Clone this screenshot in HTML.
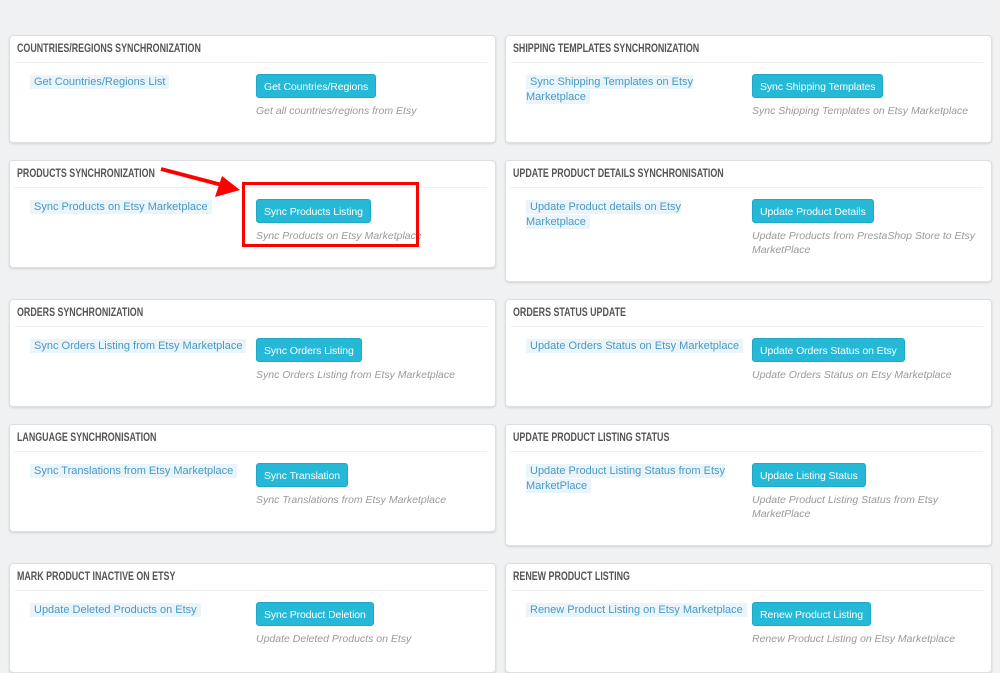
<!DOCTYPE html>
<html><head><meta charset="utf-8"><style>
body{margin:0;width:1000px;height:660px;background:#eff1f2;position:relative;overflow:hidden;font-family:"Liberation Sans",sans-serif;}
.p{position:absolute;background:#fff;border:1px solid #dcdfe3;border-radius:4px;box-shadow:0 1px 2px rgba(0,0,0,.12);box-sizing:border-box;width:487px;}
.h{position:absolute;left:7px;top:5px;font-family:"Liberation Sans",sans-serif;font-size:12px;color:#555;font-weight:bold;white-space:nowrap;transform:scaleX(.74);transform-origin:left;}
.s{position:absolute;left:4px;right:8px;top:26px;border-top:1px solid #eef0f2;}
.l{position:absolute;left:20px;top:39px;width:178px;font-size:11px;line-height:15px;color:#4a98c4;}
.l span{background:#eaf5fb;padding:1px 4px 1px 4px;}
.b{position:absolute;left:246px;top:38px;height:24px;line-height:24px;padding:0 7px;background:#25b9d7;border:1px solid #20a9c4;border-radius:3px;color:#fff;font-size:10.5px;letter-spacing:-0.1px;white-space:nowrap;box-sizing:border-box;}
.t{position:absolute;left:246px;top:68px;width:230px;font-size:10.5px;line-height:14px;font-style:italic;color:#9a9a9a;}
</style></head><body>

<div class="p" style="left:9px;top:35px;height:108px"><div class="h">COUNTRIES/REGIONS SYNCHRONIZATION</div><div class="s"></div>
<div class="l"><span>Get Countries/Regions List</span></div><div class="b">Get Countries/Regions</div><div class="t">Get all countries/regions from Etsy</div></div>

<div class="p" style="left:505px;top:35px;height:108px"><div class="h">SHIPPING TEMPLATES SYNCHRONIZATION</div><div class="s"></div>
<div class="l"><span>Sync Shipping Templates on Etsy Marketplace</span></div><div class="b">Sync Shipping Templates</div><div class="t">Sync Shipping Templates on Etsy Marketplace</div></div>

<div class="p" style="left:9px;top:160px;height:108px"><div class="h">PRODUCTS SYNCHRONIZATION</div><div class="s"></div>
<div class="l" style="width:200px"><span>Sync Products on Etsy Marketplace</span></div><div class="b">Sync Products Listing</div><div class="t">Sync Products on Etsy Marketplace</div></div>

<div class="p" style="left:505px;top:160px;height:122px"><div class="h">UPDATE PRODUCT DETAILS SYNCHRONISATION</div><div class="s"></div>
<div class="l"><span>Update Product details on Etsy Marketplace</span></div><div class="b">Update Product Details</div><div class="t">Update Products from PrestaShop Store to Etsy MarketPlace</div></div>

<div class="p" style="left:9px;top:299px;height:108px"><div class="h">ORDERS SYNCHRONIZATION</div><div class="s"></div>
<div class="l" style="width:225px"><span>Sync Orders Listing from Etsy Marketplace</span></div><div class="b">Sync Orders Listing</div><div class="t">Sync Orders Listing from Etsy Marketplace</div></div>

<div class="p" style="left:505px;top:299px;height:108px"><div class="h">ORDERS STATUS UPDATE</div><div class="s"></div>
<div class="l" style="width:225px"><span>Update Orders Status on Etsy Marketplace</span></div><div class="b">Update Orders Status on Etsy</div><div class="t">Update Orders Status on Etsy Marketplace</div></div>

<div class="p" style="left:9px;top:424px;height:108px"><div class="h">LANGUAGE SYNCHRONISATION</div><div class="s"></div>
<div class="l" style="width:225px"><span>Sync Translations from Etsy Marketplace</span></div><div class="b">Sync Translation</div><div class="t">Sync Translations from Etsy Marketplace</div></div>

<div class="p" style="left:505px;top:424px;height:122px"><div class="h">UPDATE PRODUCT LISTING STATUS</div><div class="s"></div>
<div class="l" style="width:205px"><span>Update Product Listing Status from Etsy MarketPlace</span></div><div class="b">Update Listing Status</div><div class="t" style="width:200px">Update Product Listing Status from Etsy MarketPlace</div></div>

<div class="p" style="left:9px;top:563px;height:110px"><div class="h">MARK PRODUCT INACTIVE ON ETSY</div><div class="s"></div>
<div class="l" style="width:225px"><span>Update Deleted Products on Etsy</span></div><div class="b">Sync Product Deletion</div><div class="t">Update Deleted Products on Etsy</div></div>

<div class="p" style="left:505px;top:563px;height:110px"><div class="h">RENEW PRODUCT LISTING</div><div class="s"></div>
<div class="l" style="width:225px"><span>Renew Product Listing on Etsy Marketplace</span></div><div class="b">Renew Product Listing</div><div class="t">Renew Product Listing on Etsy Marketplace</div></div>

<div style="position:absolute;left:242px;top:182px;width:177px;height:65px;border:3px solid #f00;box-sizing:border-box"></div>
<svg style="position:absolute;left:0;top:0" width="1000" height="660"><line x1="161" y1="169" x2="222" y2="185" stroke="#f00" stroke-width="4"/><polygon points="240,190 215,197 222,176" fill="#f00"/></svg>
</body></html>
